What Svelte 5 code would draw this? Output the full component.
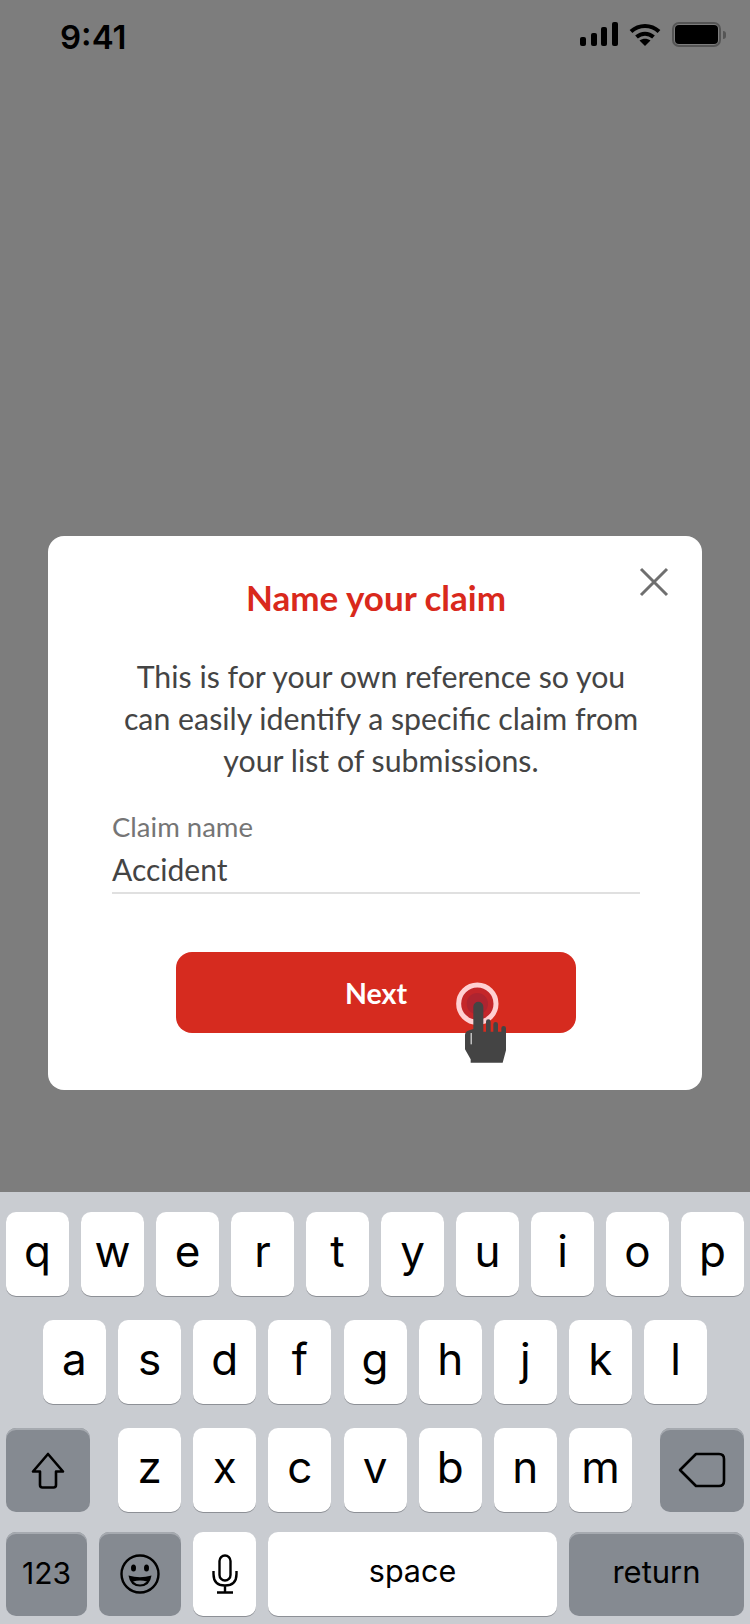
<script>
    const rowOne = ["q", "w", "e", "r", "t", "y", "u", "i", "o", "p"];
    const rowTwo = ["a", "s", "d", "f", "g", "h", "j", "k", "l"];
    const rowThree = ["z", "x", "c", "v", "b", "n", "m"];
</script>

<div class="phone">
    <header class="status">
        <span class="time">9:41</span>
        <div class="status-icons">
            <svg class="signal" width="38" height="24" viewBox="0 0 38 24">
                <rect x="0" y="15" width="6" height="9" rx="2" />
                <rect x="11" y="11" width="6" height="13" rx="2" />
                <rect x="21" y="5" width="6" height="19" rx="2" />
                <rect x="32" y="0" width="6" height="24" rx="2" />
            </svg>
            <svg class="wifi" width="32" height="23" viewBox="0 0 32 23">
                <path d="M2 8.5C10 1 22 1 30 8.5" fill="none" stroke="#000" stroke-width="4" />
                <path d="M7.5 14C12.5 9.5 19.5 9.5 24.5 14" fill="none" stroke="#000" stroke-width="4" />
                <path d="M16 23L10.5 17.5C14 15 18 15 21.5 17.5Z" />
            </svg>
            <div class="battery">
                <div class="battery-fill"></div>
            </div>
            <div class="battery-cap"></div>
        </div>
    </header>

    <main class="backdrop">
        <section class="card">
            <button class="close" aria-label="Close">
                <svg width="30" height="30" viewBox="0 0 30 30">
                    <path d="M2 2L28 28M28 2L2 28" stroke="#6f6f6f" stroke-width="3" fill="none" />
                </svg>
            </button>
            <h1>Name your claim</h1>
            <p class="intro">This is for your own reference so you can easily identify a specific claim from your list of submissions.</p>
            <div class="field">
                <span class="label">Claim name</span>
                <span class="value">Accident</span>
            </div>
            <div class="next">
                <span>Next</span>
                <svg class="tap" width="100" height="110" viewBox="0 0 300 330">
                    <circle cx="142" cy="128" r="56" fill="#c4262a" stroke="#ffd0d2" stroke-width="15" />
                    <circle cx="142" cy="128" r="32" fill="#ae2430" />
                    <path d="M130 137A15 15 0 0 1 160 137V212H168V182A7 7 0 0 1 182 182V212H190V190A7 7 0 0 1 204 190V212H214V202A7 7 0 0 1 228 202V268L218 305H122V295L105 265V222Q105 212 118 208L130 204Z" fill="#444" />
                    <path d="M123.500 216V250" stroke="#fff" stroke-width="3" />
                </svg>
            </div>
        </section>
    </main>

    <div class="keyboard">
        <div class="row">
            {#each rowOne as key}
                <div class="key">{key}</div>
            {/each}
        </div>
        <div class="row two">
            {#each rowTwo as key}
                <div class="key">{key}</div>
            {/each}
        </div>
        <div class="row three">
            <div class="key dark wide">
                <svg width="34" height="37" viewBox="0 0 34 37">
                    <path d="M17 2L2 19.500H9V33Q9 35.500 11.500 35.500H22.500Q25 35.500 25 33V19.500H32Z" fill="none" stroke="#000" stroke-width="2.600" stroke-linejoin="round" />
                </svg>
            </div>
            <div class="letters">
                {#each rowThree as key}
                    <div class="key">{key}</div>
                {/each}
            </div>
            <div class="key dark wide">
                <svg width="48" height="36" viewBox="0 0 48 36">
                    <path d="M2 18L18 2H41Q46 2 46 7V29Q46 34 41 34H18Z" fill="none" stroke="#000" stroke-width="2.600" stroke-linejoin="round" />
                </svg>
            </div>
        </div>
        <div class="row last">
            <div class="key dark small num">123</div>
            <div class="key dark emoji">
                <svg width="40" height="40" viewBox="0 0 40 40">
                    <circle cx="20" cy="20" r="18.500" fill="none" stroke="#000" stroke-width="2.400" />
                    <ellipse cx="13.500" cy="14" rx="2.500" ry="3.500" />
                    <ellipse cx="26.500" cy="14" rx="2.500" ry="3.500" />
                    <path d="M8.500 21.500Q20 25 31.500 21.500Q30 32.500 20 32.500Q10 32.500 8.500 21.500Z" />
                    <path d="M13 27.500Q20 25.500 27 27.500Q24 30.500 20 30.500Q16 30.500 13 27.500Z" fill="#858a91" />
                </svg>
            </div>
            <div class="key">
                <svg width="26" height="40" viewBox="0 0 26 40">
                    <rect x="7.500" y="1.500" width="11" height="25" rx="5.500" fill="none" stroke="#000" stroke-width="2.400" />
                    <path d="M1.500 17V20Q1.500 31.500 13 31.500Q24.500 31.500 24.500 20V17M13 31.500V38.500M5 38.500H21" fill="none" stroke="#000" stroke-width="2.400" />
                </svg>
            </div>
            <div class="key space">space</div>
            <div class="key dark return">return</div>
        </div>
    </div>
</div>

<style>
    :global(body) {
        background: #7d7d7d;
    }

    .phone {
        width: 750px;
        height: 1624px;
        display: flex;
        flex-direction: column;
        background: #7d7d7d;
        font-family: Lato, "Liberation Sans", sans-serif;
        overflow: hidden;
    }

    .status {
        height: 70px;
        flex: none;
        display: flex;
        justify-content: space-between;
        padding: 22px 24px 0 60px;
        box-sizing: border-box;
    }

    .time {
        font-family: Inter, sans-serif;
        font-size: 33px;
        font-weight: 600;
        line-height: 30px;
        color: #000;
    }

    .status-icons {
        display: flex;
        align-items: flex-start;
        height: 26px;
    }

    .signal {
        margin: 0 11px 0 0;
    }

    .wifi {
        margin: 1px 11px 0 0;
    }

    .battery {
        width: 49px;
        height: 25px;
        box-sizing: border-box;
        border: 2px solid #555;
        border-radius: 7px;
        padding: 1px;
    }

    .battery-fill {
        height: 100%;
        background: #000;
        border-radius: 4px;
    }

    .battery-cap {
        width: 3px;
        height: 8px;
        margin: 9px 0 0 2px;
        background: #555;
        border-radius: 0 3px 3px 0;
    }

    .backdrop {
        flex: 1;
        display: flex;
        flex-direction: column;
        justify-content: flex-end;
        padding: 0 48px 102px;
    }

    .card {
        position: relative;
        height: 554px;
        box-sizing: border-box;
        background: #fff;
        border-radius: 16px;
        padding: 39px 62px 0 64px;
        display: flex;
        flex-direction: column;
    }

    .close {
        position: absolute;
        top: 31px;
        right: 33px;
        padding: 0;
        border: 0;
        background: none;
        display: flex;
    }

    h1 {
        margin: 0;
        font-size: 35px;
        font-weight: 700;
        line-height: 44px;
        text-align: center;
        color: #d9291c;
    }

    .intro {
        margin: 36px 0 0;
        padding-left: 10px;
        font-size: 30.3px;
        line-height: 42px;
        text-align: center;
        color: #444;
    }

    .field {
        margin-top: 29px;
        display: flex;
        flex-direction: column;
        border-bottom: 2px solid #e0e0e0;
    }

    .label {
        font-size: 27.5px;
        line-height: 34px;
        color: #757575;
    }

    .value {
        font-size: 30px;
        line-height: 50px;
        height: 48px;
        color: #444;
    }

    .next {
        position: relative;
        align-self: center;
        width: 400px;
        height: 81px;
        margin-top: 58px;
        background: #d62b1f;
        border-radius: 16px;
        display: flex;
        align-items: center;
        justify-content: center;
        font-size: 28.5px;
        font-weight: 700;
        color: #fff;
    }

    .tap {
        position: absolute;
        left: 254px;
        top: 9px;
    }

    .keyboard {
        height: 432px;
        flex: none;
        box-sizing: border-box;
        background: #c9ccd1;
        padding-top: 20px;
        display: flex;
        flex-direction: column;
        gap: 24px;
        font-family: Inter, sans-serif;
        color: #000;
    }

    .row {
        display: flex;
        justify-content: center;
        gap: 12px;
    }

    .row.two {
        gap: 12.15px;
    }

    .row.three {
        justify-content: space-between;
        padding: 0 6px;
    }

    .row.last {
        margin-top: -4px;
        padding: 0 6px;
    }

    .letters {
        display: flex;
        gap: 12.15px;
    }

    .key {
        width: 63px;
        height: 84px;
        flex: none;
        box-sizing: border-box;
        padding-bottom: 7px;
        background: #fff;
        border-radius: 10px;
        box-shadow: 0 1px 0 #8d9096;
        display: flex;
        align-items: center;
        justify-content: center;
        font-size: 44px;
        line-height: 1;
    }

    .key:has(svg) {
        padding-bottom: 0;
    }

    .dark {
        background: #858a91;
        box-shadow: inset 0 2px 0 #a6aab0;
    }

    .wide {
        width: 84px;
    }

    .small {
        width: 81px;
    }

    .num {
        font-size: 30px;
        padding-bottom: 2px;
    }

    .emoji {
        width: 82px;
    }

    .space {
        width: 289px;
        font-size: 30.5px;
        padding-bottom: 6px;
    }

    .return {
        width: 175px;
        font-size: 31px;
        padding-bottom: 6px;
    }
</style>
